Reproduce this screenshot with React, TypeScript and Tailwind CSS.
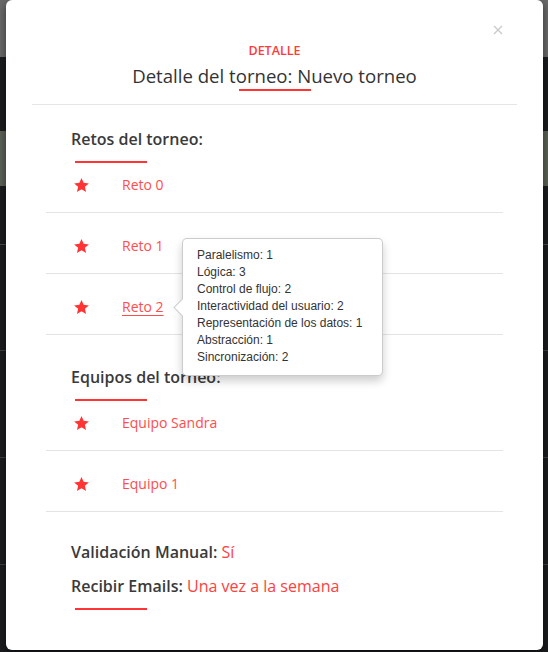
import React from 'react';

const retos = ['Reto 0', 'Reto 1', 'Reto 2'];
const equipos = ['Equipo Sandra', 'Equipo 1'];

const stats = [
  'Paralelismo: 1',
  'Lógica: 3',
  'Control de flujo: 2',
  'Interactividad del usuario: 2',
  'Representación de los datos: 1',
  'Abstracción: 1',
  'Sincronización: 2',
];

function Star() {
  return (
    <svg width="15" height="14" viewBox="2 2 20 19" className="shrink-0">
      <polygon
        points="12,2 14.9,8.6 22,9.3 16.6,14 18.2,21 12,17.3 5.8,21 7.4,14 2,9.3 9.1,8.6"
        fill="#ff3535"
      />
    </svg>
  );
}

function ListRow({ label, underline }: { label: string; underline?: boolean }) {
  return (
    <div className="flex items-center pl-[28px] pt-[23px] pb-[17px] border-b border-[#e4e4e4]">
      <Star />
      <span
        className={
          underline
            ? 'ml-[33px] text-[14px] leading-[20px] text-[#ff4d4d] underline underline-offset-[3px]'
            : 'ml-[33px] text-[14px] leading-[20px] text-[#ff4d4d]'
        }
      >
        {label}
      </span>
    </div>
  );
}

export default function App() {
  return (
    <div className="relative h-[652px] w-full overflow-hidden bg-[#1b1c1e] font-['Open_Sans',sans-serif]">
      {/* page behind the dialog */}
      <div className="flex flex-col">
        <div className="h-[57px] bg-[#696969]" />
        <div className="h-[74px] bg-[#1b1c1e]" />
        <div className="h-[55px] bg-[#5c6258]" />
        <div className="h-[59px] border-b border-[#4a4b4d]" />
        <div className="h-[106px] border-b border-[#3f4042]" />
        <div className="h-[107px] border-b border-[#3f4042]" />
        <div className="h-[107px] border-b border-[#3f4042]" />
      </div>

      {/* dialog */}
      <div className="absolute left-[6px] top-0 h-[650px] w-[537px] rounded-[6px] bg-white shadow-[0_3px_9px_rgba(0,0,0,0.5)]">
        <button className="absolute left-[487px] top-[25px] w-[10px] h-[10px]">
          <svg width="10" height="10" viewBox="0 0 10 10">
            <path d="M1 1L9 9M9 1L1 9" stroke="#c9c9c9" strokeWidth="1.3" />
          </svg>
        </button>

        <div className="mx-[26px] pt-[43px] flex flex-col items-center border-b border-[#e5e5e5] pb-[13px]">
          <div className="text-[12.5px] leading-[16px] font-semibold uppercase text-[#ff3b3b]">Detalle</div>
          <h4 className="mt-[5px] text-[18.6px] leading-[24px] text-[#333]">Detalle del torneo: Nuevo torneo</h4>
          <div className="mt-[1px] h-[2px] w-[72px] bg-[#ff3535]" />
        </div>

        <div className="relative pt-[22px]">
          <h5 className="pl-[65px] text-[16px] leading-[24px] font-semibold text-[#3a3a3a]">Retos del torneo:</h5>
          <div className="ml-[69px] mt-[10px] h-[2px] w-[72px] bg-[#ff3535]" />
          <div className="mx-[40px] mt-[-11px]">
            {retos.map((r, i) => (
              <ListRow key={r} label={r} underline={i === 2} />
            ))}
          </div>

          <h5 className="mt-[30px] pl-[65px] text-[16px] leading-[24px] font-semibold text-[#3a3a3a]">Equipos del torneo:</h5>
          <div className="ml-[69px] mt-[10px] h-[2px] w-[72px] bg-[#ff3535]" />
          <div className="mx-[40px] mt-[-11px]">
            {equipos.map((e) => (
              <ListRow key={e} label={e} />
            ))}
          </div>

          <div className="mt-[28px] pl-[65px] flex flex-col gap-[10px] text-[16px] leading-[24px]">
            <p>
              <span className="font-semibold text-[#3a3a3a]">Validación Manual:</span>{' '}
              <span className="text-[#ff4040]">Sí</span>
            </p>
            <p>
              <span className="font-semibold text-[#3a3a3a]">Recibir Emails:</span>{' '}
              <span className="text-[#ff4040]">Una vez a la semana</span>
            </p>
          </div>
          <div className="ml-[69px] mt-[10px] h-[2px] w-[72px] bg-[#ff3535]" />

          {/* popover for Reto 2 */}
          <div className="absolute left-[176px] top-[133px] w-[201px] rounded-[5px] border border-[rgba(0,0,0,0.2)] bg-white pl-[14px] pt-[8px] pb-[9px] shadow-[0_5px_10px_rgba(0,0,0,0.2)] font-['Liberation_Sans',Arial,sans-serif] text-[12px] leading-[17px] text-[#333]">
            <div className="absolute left-[-7.5px] top-[62px] h-[13px] w-[13px] rotate-45 border-b border-l border-[rgba(0,0,0,0.2)] bg-white" />
            {stats.map((s) => (
              <div key={s} className="relative whitespace-nowrap">
                {s}
              </div>
            ))}
          </div>
        </div>
      </div>
    </div>
  );
}
